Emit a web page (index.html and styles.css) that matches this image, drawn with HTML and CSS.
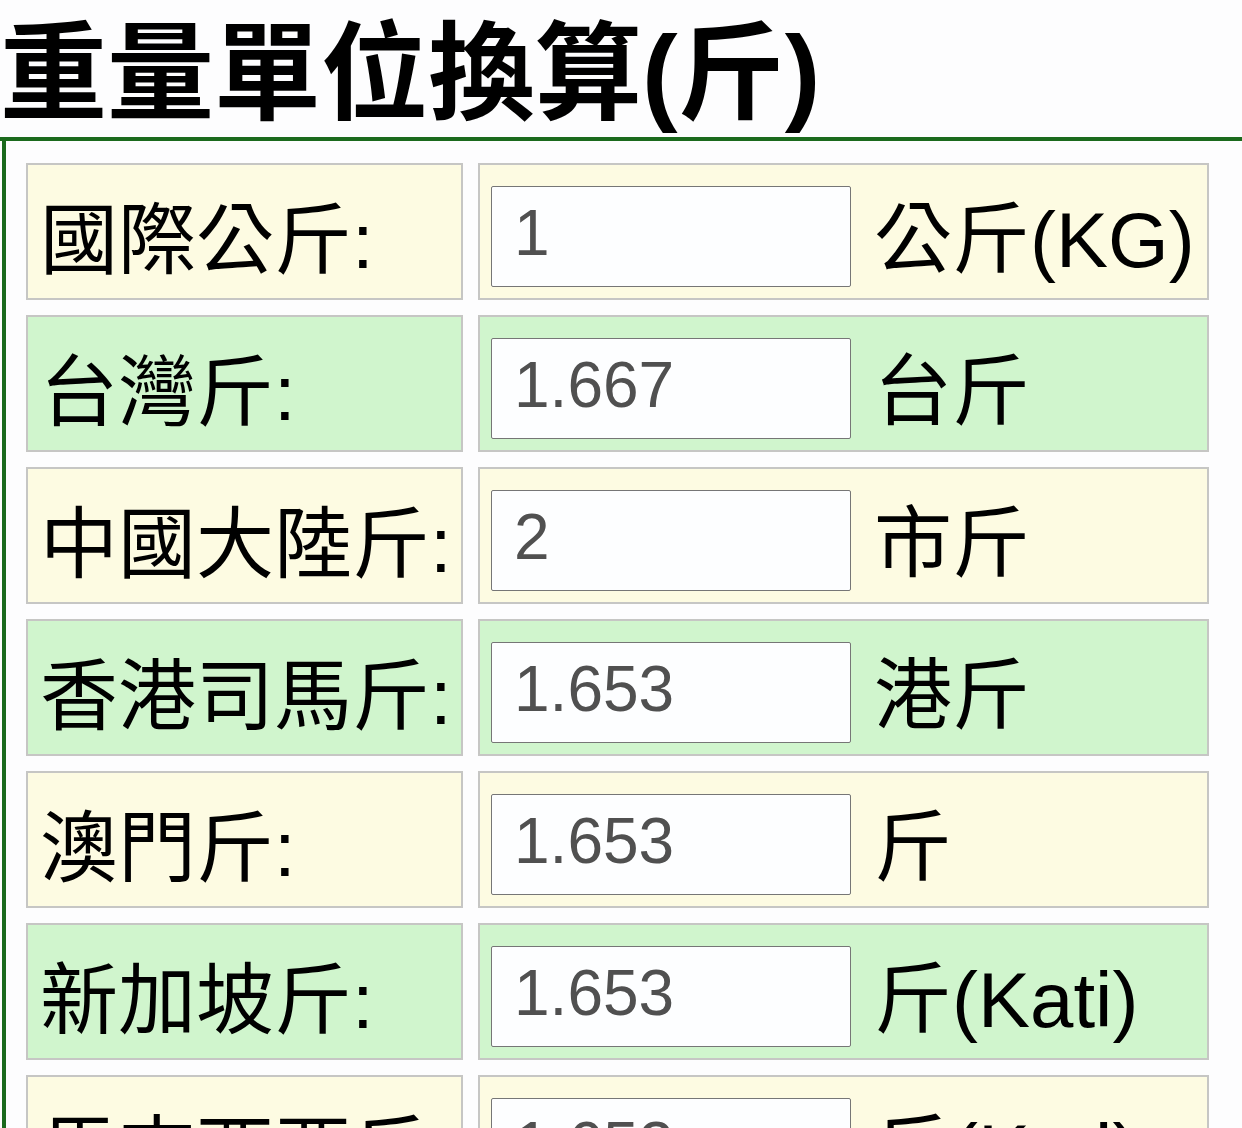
FILE: index.html
```html
<!DOCTYPE html>
<html lang="zh-Hant">
<head>
<meta charset="utf-8">
<title>重量單位換算(斤)</title>
<link rel="stylesheet" href="styles.css">
</head>
<body>
<h1 class="title">重量單位換算(斤)</h1>
<div class="panel">
  <div class="grid">
    <div class="cell label yellow">國際公斤:</div>
    <div class="cell value yellow"><input class="num" type="text" value="1"><span class="unit">公斤(KG)</span></div>

    <div class="cell label green">台灣斤:</div>
    <div class="cell value green"><input class="num" type="text" value="1.667"><span class="unit">台斤</span></div>

    <div class="cell label yellow">中國大陸斤:</div>
    <div class="cell value yellow"><input class="num" type="text" value="2"><span class="unit">市斤</span></div>

    <div class="cell label green">香港司馬斤:</div>
    <div class="cell value green"><input class="num" type="text" value="1.653"><span class="unit">港斤</span></div>

    <div class="cell label yellow">澳門斤:</div>
    <div class="cell value yellow"><input class="num" type="text" value="1.653"><span class="unit">斤</span></div>

    <div class="cell label green">新加坡斤:</div>
    <div class="cell value green"><input class="num" type="text" value="1.653"><span class="unit">斤(Kati)</span></div>

    <div class="cell label yellow">馬來西亞斤:</div>
    <div class="cell value yellow"><input class="num" type="text" value="1.653"><span class="unit">斤(Kati)</span></div>
  </div>
</div>
</body>
</html>
```
FILE: styles.css
```css
html {
  overflow: hidden;
}

body {
  margin: 0;
  background: #fdfdfe;
  color: #000;
  font-family: "Liberation Sans", "Noto Sans CJK TC", sans-serif;
}

.title {
  margin: 0 0 7px 0;
  padding-top: 18px;
  font-family: "Liberation Sans", "Noto Sans CJK TC", sans-serif;
  font-weight: bold;
  font-size: 107px;
  line-height: 112px;
  white-space: nowrap;
}

.panel {
  border-top: 4px solid #1b6a1d;
}

.grid {
  margin-left: 2px;
  border-left: 4px solid #1b6a1d;
  padding: 22px 0 0 20px;
  display: grid;
  grid-template-columns: 437px 731px;
  grid-auto-rows: 137px;
  column-gap: 15px;
  row-gap: 15px;
}

.cell {
  box-sizing: border-box;
  border: 2px solid #c6c6c4;
  display: flex;
  align-items: center;
  font-size: 78px;
  white-space: nowrap;
}

.yellow {
  background: #fdfbe2;
}

.green {
  background: #d0f5cd;
}

.label {
  padding: 4px 0 0 12px;
}

.value {
  padding-left: 11px;
}

.num {
  box-sizing: border-box;
  width: 360px;
  height: 101px;
  margin: 10px 0 0 0;
  padding: 0 0 8px 22px;
  border: 1px solid #767676;
  border-radius: 2px;
  background: #fdfeff;
  color: #505050;
  font-family: "Liberation Sans", sans-serif;
  font-size: 64px;
  outline: none;
}

.unit {
  margin-left: 23px;
  padding-top: 2px;
}
```
